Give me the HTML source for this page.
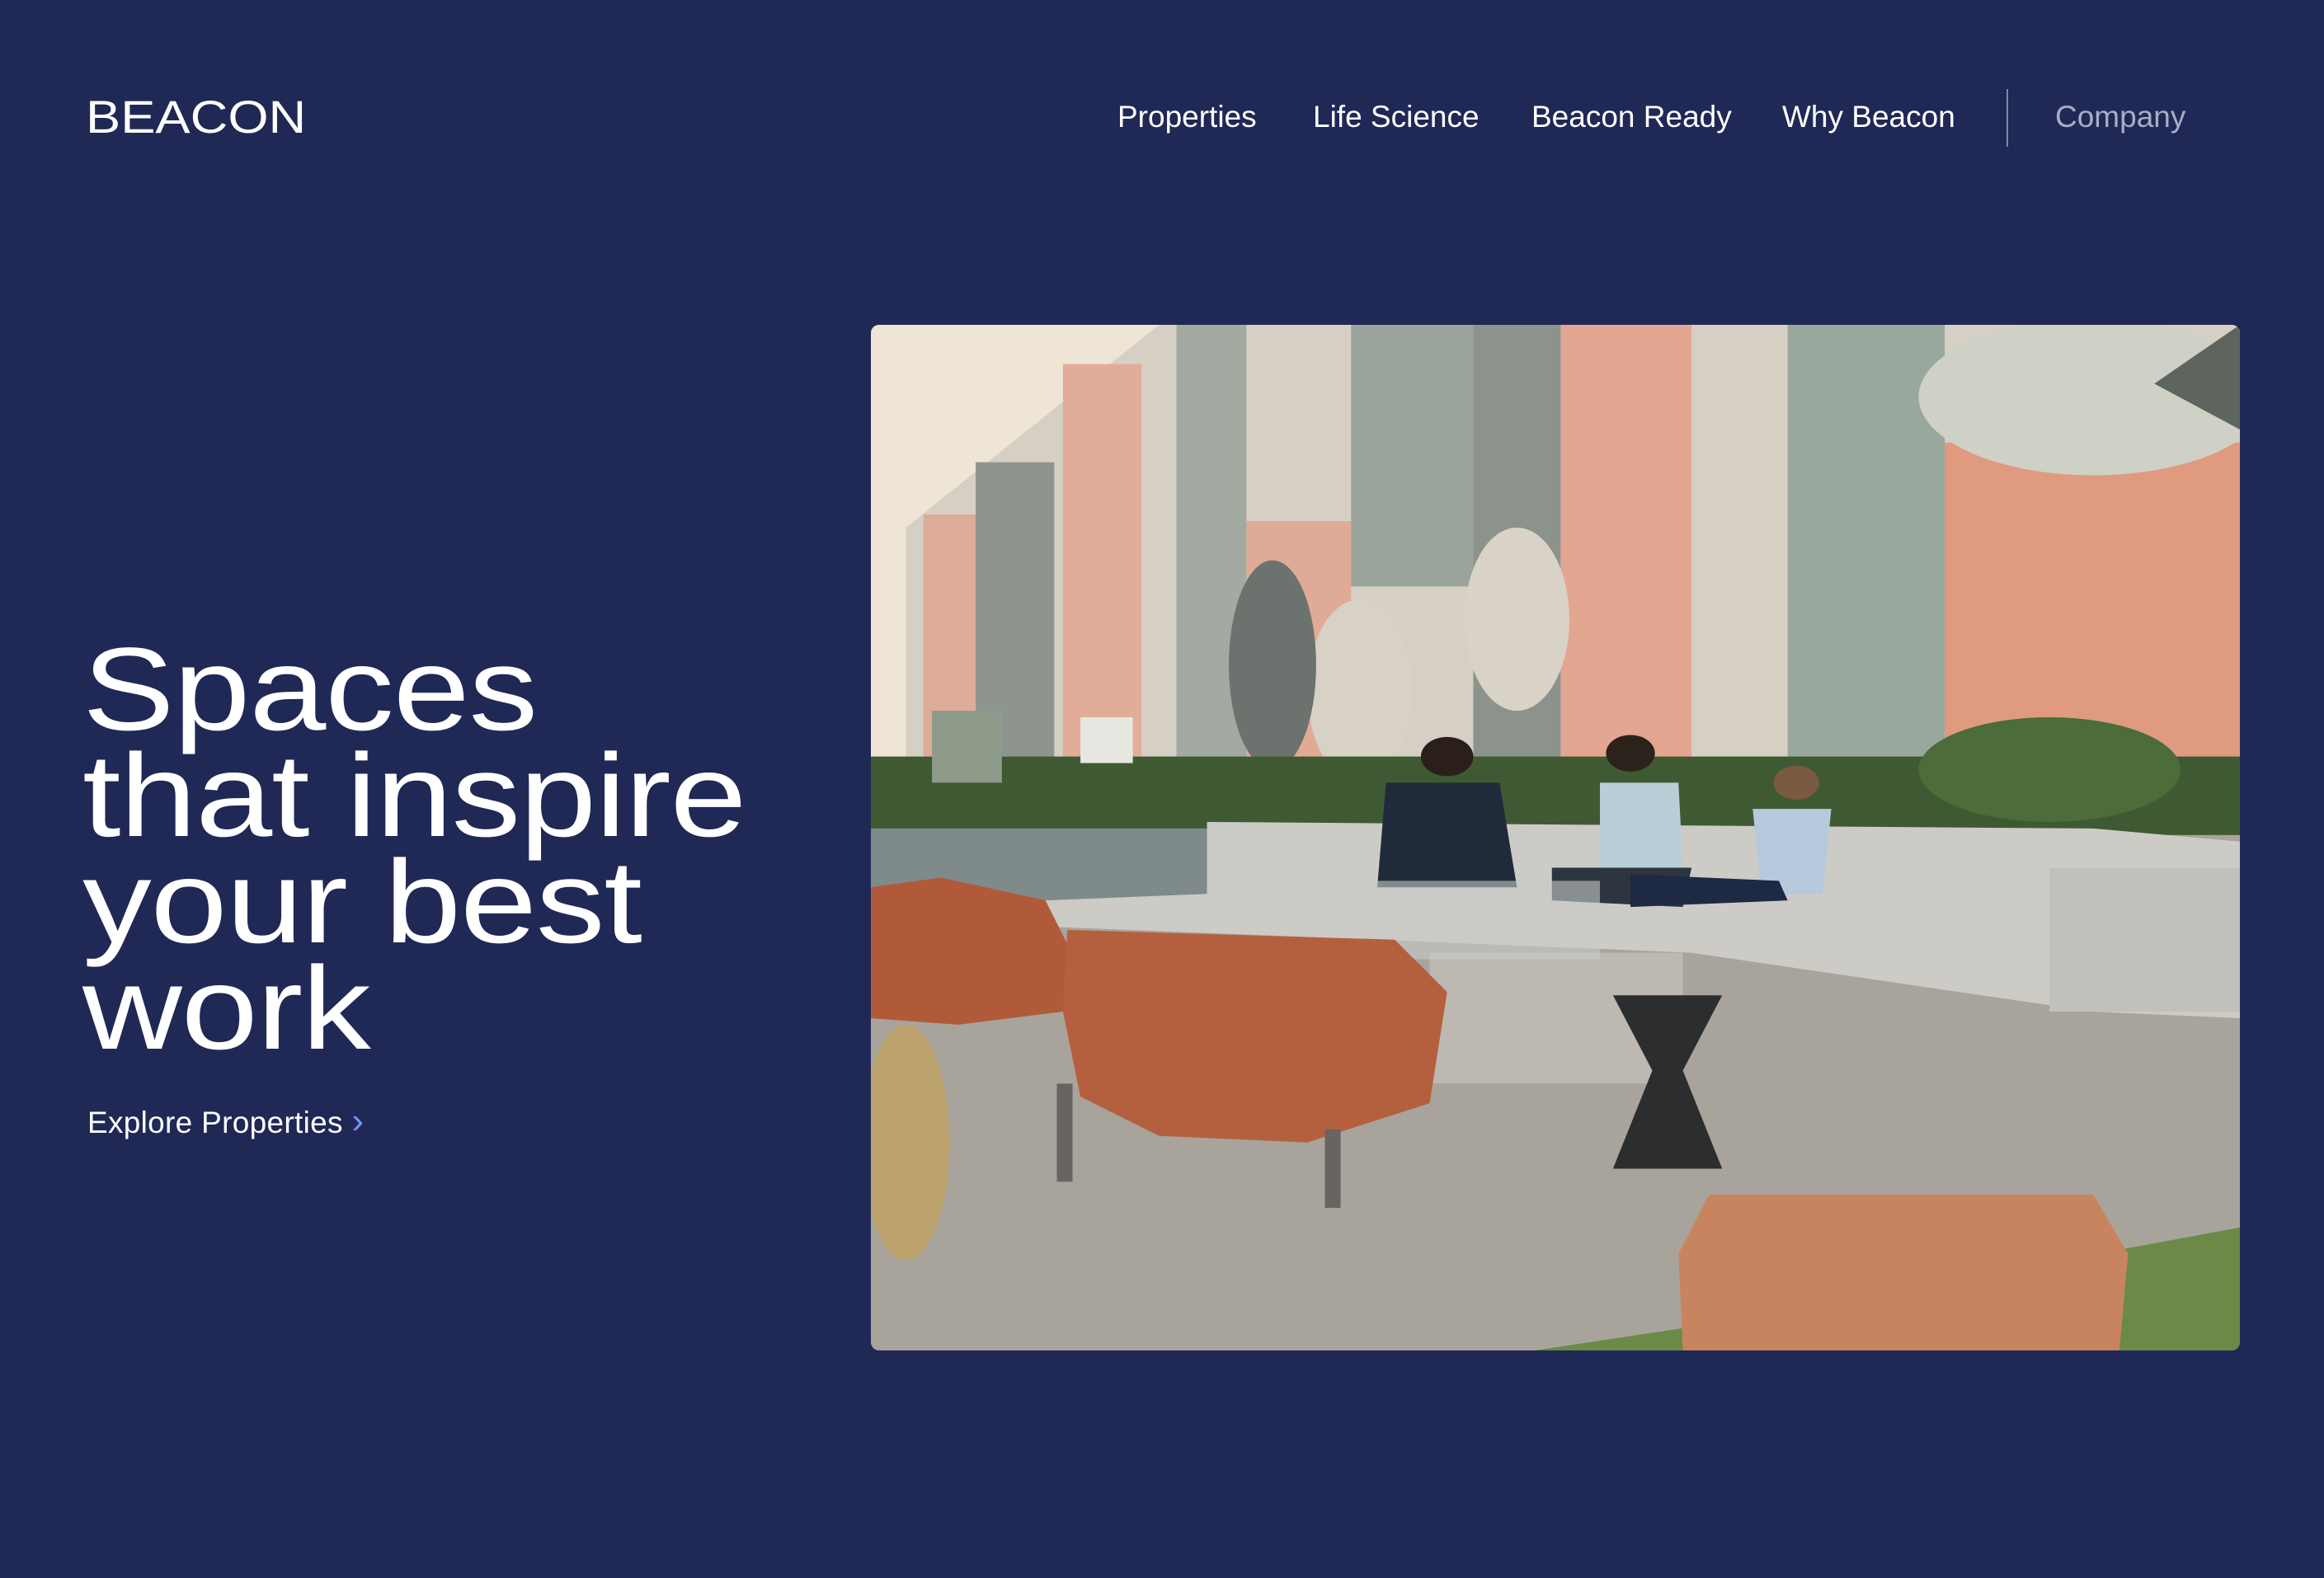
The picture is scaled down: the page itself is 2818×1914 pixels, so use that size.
<!DOCTYPE html>
<html><head><meta charset="utf-8"><style>
html,body{margin:0;padding:0}
body{width:2818px;height:1914px;background:#202856;position:relative;overflow:hidden;font-family:"Liberation Sans",sans-serif;color:#fff}
.logo{position:absolute;left:104px;top:112px;font-size:56px;letter-spacing:0px;transform:scaleX(1.13);transform-origin:left top;line-height:60px}
.nav{position:absolute;top:118px;font-size:37px;line-height:48px;white-space:nowrap}
.sep{position:absolute;left:2433px;top:108px;width:2px;height:70px;background:#8088a8}
h1{position:absolute;left:100px;top:772px;margin:0;font-weight:normal;font-size:143px;line-height:129px;transform:scaleX(1.17);transform-origin:left top;letter-spacing:-1px}
.explore{position:absolute;left:106px;top:1336px;font-size:37px;line-height:48px;letter-spacing:0.3px}
.explore span{color:#7592ff;font-size:44px}
.img{position:absolute;left:1056px;top:394px;width:1660px;height:1244px;border-radius:10px;overflow:hidden}
.img svg{width:100%;height:100%;display:block}
</style></head><body>
<div class="logo">BEACON</div>
<div class="nav" style="left:1355px">Properties</div>
<div class="nav" style="left:1592px">Life Science</div>
<div class="nav" style="left:1857px">Beacon Ready</div>
<div class="nav" style="left:2161px">Why Beacon</div>
<div class="sep"></div>
<div class="nav" style="left:2492px;color:#a8adc4">Company</div>
<h1>Spaces<br>that inspire<br>your best<br>work</h1>
<div class="explore">Explore Properties <span>›</span></div>
<div class="img"><svg viewBox="0 0 1568 1568" preserveAspectRatio="none">
<rect width="1568" height="1568" fill="#a8a49c"/>
<rect width="1568" height="760" fill="#efe5d6"/>
<polygon points="40,310 330,0 1568,0 1568,700 40,700" fill="#d6d0c4"/>
<rect x="790" y="0" width="150" height="700" fill="#e3a690"/>
<rect x="1050" y="0" width="180" height="700" fill="#9aa79d"/>
<rect x="1230" y="180" width="338" height="520" fill="#df9a80"/>
<rect x="690" y="0" width="100" height="700" fill="#8c938d"/>
<rect x="550" y="0" width="140" height="400" fill="#9aa49c"/>
<rect x="430" y="300" width="120" height="400" fill="#e0ab96"/>
<rect x="350" y="0" width="80" height="700" fill="#a2aaa1"/>
<rect x="220" y="60" width="90" height="640" fill="#e2ad98"/>
<rect x="120" y="210" width="90" height="490" fill="#8e958f"/>
<rect x="60" y="290" width="60" height="410" fill="#deac98"/>
<ellipse cx="1400" cy="110" rx="200" ry="120" fill="#cfd0c6"/>
<polygon points="1470,90 1568,0 1568,160" fill="#5e655f"/>
<ellipse cx="740" cy="450" rx="60" ry="140" fill="#d9d2c6"/>
<ellipse cx="560" cy="560" rx="60" ry="140" fill="#d8d1c5"/>
<ellipse cx="460" cy="520" rx="50" ry="160" fill="#6c726d"/>
<rect x="0" y="660" width="1568" height="120" fill="#3f5a33"/>
<ellipse cx="1350" cy="680" rx="150" ry="80" fill="#4c6c3a"/>
<rect x="0" y="770" width="390" height="110" fill="#7f8b8a"/>
<path d="M385 760 L1400 770 L1568 790 L1568 1060 L1400 1050 L940 960 L580 940 L200 920 L200 880 L385 870Z" fill="#cdcbc6"/>
<rect x="1350" y="830" width="218" height="220" fill="#c2c0bb"/>
<path d="M590 700 L720 700 L740 860 L580 860Z" fill="#1f2b3a"/>
<circle cx="660" cy="660" r="30" fill="#2a1f1a"/>
<path d="M835 700 L925 700 L930 830 L835 830Z" fill="#b9cfd8"/>
<path d="M780 830 L940 830 L930 890 L780 880Z" fill="#2c3540"/>
<circle cx="870" cy="655" r="28" fill="#2c221c"/>
<path d="M1010 740 L1100 740 L1090 870 L1020 870Z" fill="#b6c9dd"/>
<path d="M870 840 L1040 850 L1050 880 L870 890Z" fill="#1e2a44"/>
<circle cx="1060" cy="700" r="26" fill="#7a5a40"/>
<rect x="70" y="590" width="80" height="110" fill="#8e9a8a"/>
<rect x="240" y="600" width="60" height="70" fill="#e8e6e0"/>
<rect x="640" y="960" width="290" height="200" fill="#bdb9b2"/>
<rect x="570" y="850" width="265" height="120" fill="#c8cbc8" opacity="0.6"/>
<path d="M0 860 L80 845 L200 880 L230 960 L220 1050 L100 1070 L0 1060Z" fill="#b05a3a"/>
<path d="M225 925 L600 940 L660 1020 L640 1190 L500 1250 L330 1240 L240 1180 L220 1050Z" fill="#b4603e"/>
<rect x="213" y="1160" width="18" height="150" fill="#6a6460"/>
<rect x="520" y="1230" width="18" height="120" fill="#6a6460"/>
<path d="M850 1025 L975 1025 L930 1140 L975 1290 L850 1290 L895 1140Z" fill="#2b2d2e"/>
<polygon points="760,1568 1000,1520 1568,1380 1568,1568" fill="#6b8a47"/>
<path d="M960 1330 L1400 1330 L1440 1420 L1430 1568 L930 1568 L925 1420Z" fill="#c8845e"/>
<ellipse cx="40" cy="1250" rx="50" ry="180" fill="#c9a24e" opacity="0.6"/>
</svg></div>
</body></html>
